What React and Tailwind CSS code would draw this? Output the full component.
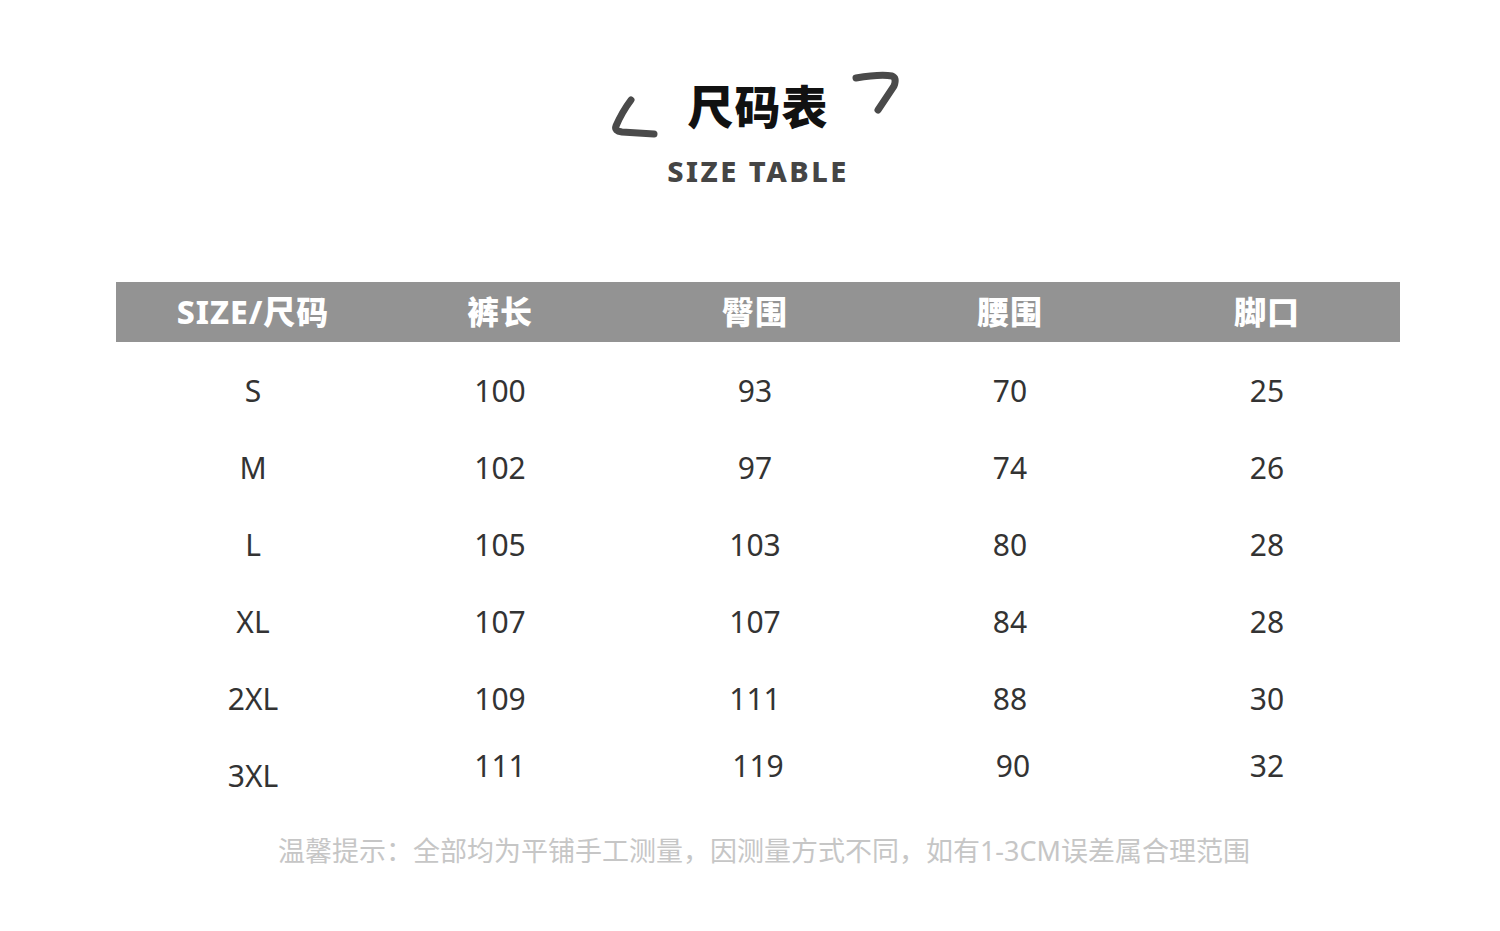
import React from "react";

const rows = [
  ["S", "100", "93", "70", "25"],
  ["M", "102", "97", "74", "26"],
  ["L", "105", "103", "80", "28"],
  ["XL", "107", "107", "84", "28"],
  ["2XL", "109", "111", "88", "30"],
  ["3XL", "111", "119", "90", "32"],
];

const heads = ["SIZE/尺码", "裤长", "臀围", "腰围", "脚口"];

const font = { fontFamily: '"Noto Sans", "Noto Sans CJK SC", sans-serif' };

const App = () => {
  return (
    <div className="w-[1500px] h-[931px] bg-white flex flex-col items-center pl-[16px]" style={font}>
      {/* title */}
      <div className="relative mt-[76px] w-[300px] flex flex-col items-center">
        <svg className="absolute left-[2px] top-[20px]" width="50" height="44" viewBox="0 0 50 44">
          <path d="M21 4 Q12 16 6 30 Q4 35 12 36 L44 38" fill="none" stroke="#4a4a4a" strokeWidth="7" strokeLinecap="round" strokeLinejoin="round" />
        </svg>
        <svg className="absolute left-[242px] top-[-6px]" width="52" height="46" viewBox="0 0 52 46">
          <path d="M6 8 Q30 4 42 6 Q47 8 44 16 L28 40" fill="none" stroke="#4a4a4a" strokeWidth="7" strokeLinecap="round" strokeLinejoin="round" />
        </svg>
        <div className="text-[46px] font-black leading-[60px] text-[#111] tracking-[1px]">尺码表</div>
        <div className="mt-[17px] text-[29px] font-extrabold leading-[36px] text-[#454545] tracking-[2.5px]">SIZE TABLE</div>
      </div>

      {/* table */}
      <div className="mt-[93px] w-[1284px]">
        <div className="h-[60px] bg-[#939393] grid grid-cols-[274px_220px_290px_220px_1fr] items-center">
          {heads.map((h, i) => (
            <div key={h} className={`text-center text-white text-[32px] font-extrabold tracking-[1px] ${i === 4 ? "pl-[14px]" : ""}`}>
              {h}
            </div>
          ))}
        </div>
        <div className="mt-[10px]">
          {rows.map((r, ri) => (
            <div key={r[0]} className="h-[77px] grid grid-cols-[274px_220px_290px_220px_1fr] items-center">
              {r.map((c, i) => (
                <div
                  key={i}
                  className={`text-center text-[30px] text-[#333] ${i === 4 ? "pl-[14px]" : ""} ${
                    ri === 5 && i > 0 ? "pb-[20px]" : ""
                  } ${ri === 5 && i > 1 ? "pl-[6px]" : ""}`}
                >
                  {c}
                </div>
              ))}
            </div>
          ))}
        </div>
      </div>

      <div className="mt-[20px] pl-[12px] text-[27px] text-[#c6c6c6] tracking-[0px] leading-[34px]">
        温馨提示：全部均为平铺手工测量，因测量方式不同，如有1-3CM误差属合理范围
      </div>
    </div>
  );
};

export default App;
